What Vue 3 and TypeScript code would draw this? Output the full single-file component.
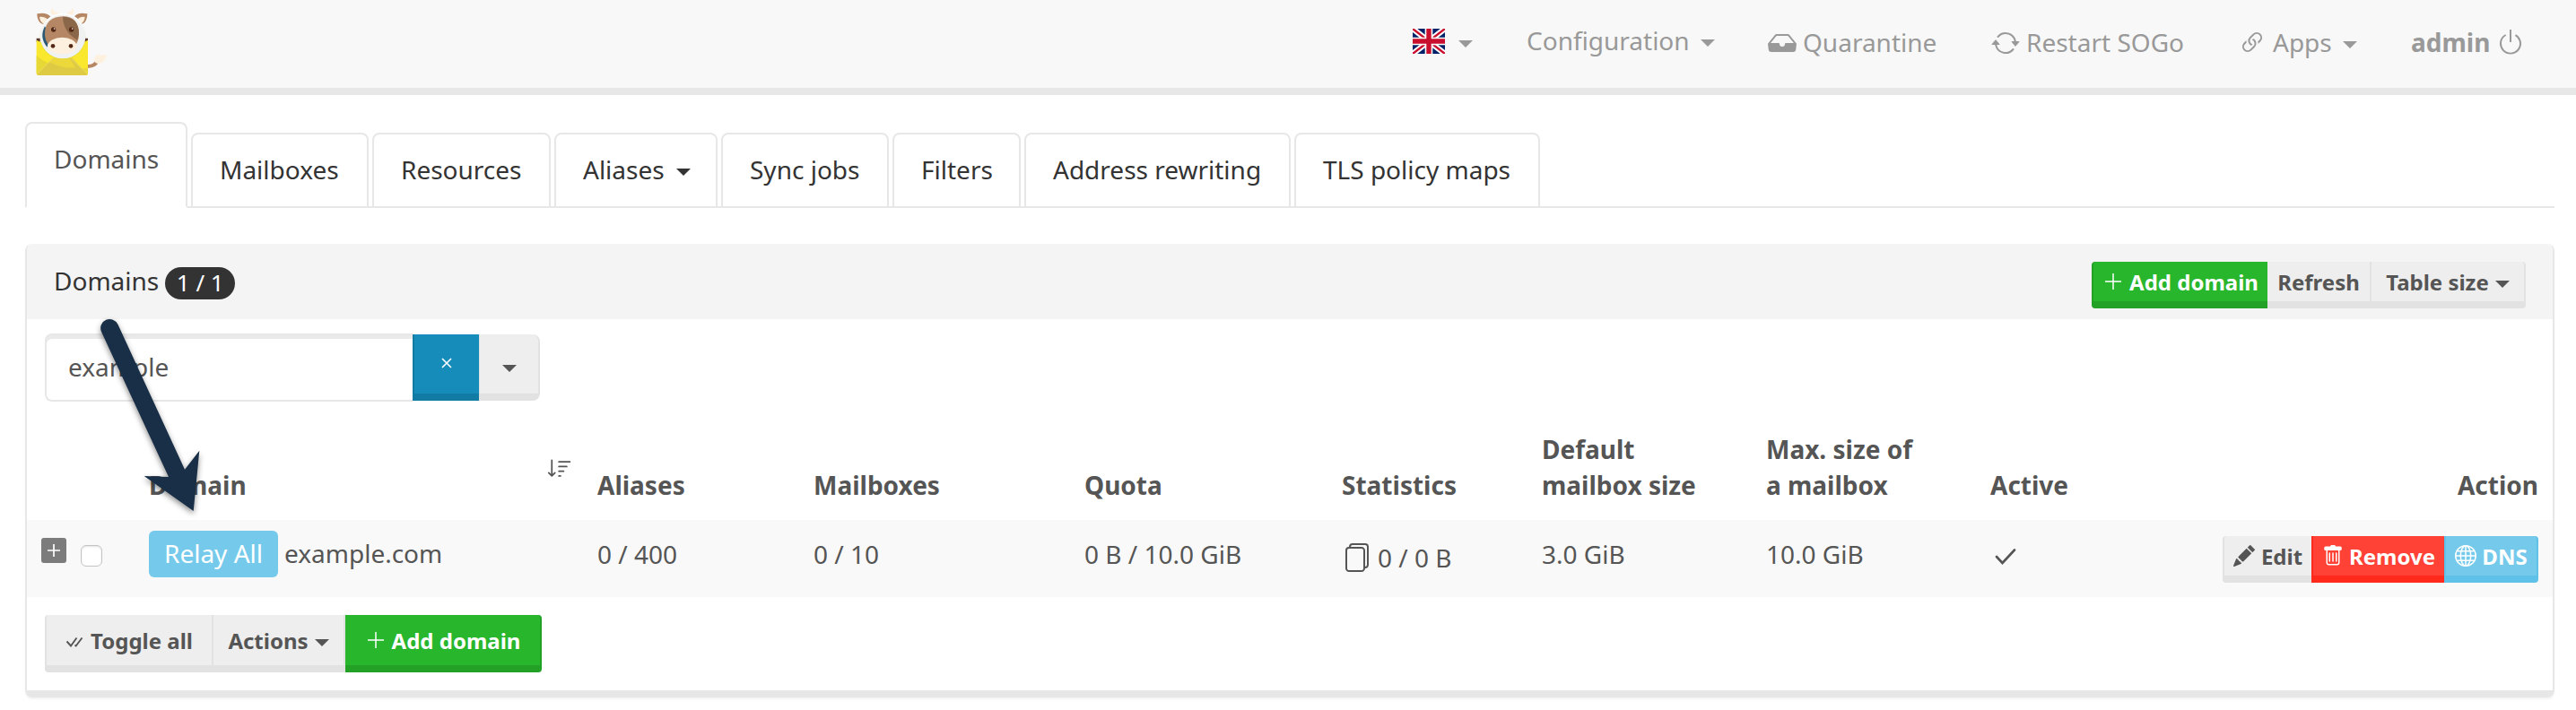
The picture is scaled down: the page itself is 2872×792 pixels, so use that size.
<script setup lang="ts">
interface Tab { label: string; width: number; caret?: boolean; active?: boolean }

const tabs: Tab[] = [
  { label: 'Domains', width: 181, active: true },
  { label: 'Mailboxes', width: 198 },
  { label: 'Resources', width: 199 },
  { label: 'Aliases', width: 182, caret: true },
  { label: 'Sync jobs', width: 187 },
  { label: 'Filters', width: 143 },
  { label: 'Address rewriting', width: 297 },
  { label: 'TLS policy maps', width: 274 },
]

const row = {
  domain: 'example.com',
  aliases: '0 / 400',
  mailboxes: '0 / 10',
  quota: '0 B / 10.0 GiB',
  stats: '0 / 0 B',
  defaultSize: '3.0 GiB',
  maxSize: '10.0 GiB',
}
</script>

<template>
  <div class="page">
    <header class="navbar">
      <svg class="logo" viewBox="0 0 330 300">
        <path d="M232 216c14 1 22-4 28-14l10 6c-6 14-20 20-38 20z" fill="#b58765" />
        <path d="M256 206c-4-12 4-20 16-26l2 6c8-2 18-4 26 0-8 4-8 24-26 26-8 2-12 0-18-6z" fill="#fef0de" />
        <path d="M62 128h12v12H62zM222 128h12v12h-12z" fill="#5a3a2a" />
        <path d="M62 134l12 6h148l12-6v110q0 8-8 8H70q-8 0-8-8z" fill="#f9e82d" />
        <path d="M62 186q50 48 172 42v16q0 8-8 8H70q-8 0-8-8z" fill="#e8d835" />
        <path d="M64 248l52-54h66l50 54q-3 4-8 4H72q-5 0-8-4z" fill="#dfcb43" />
        <path d="M104 206q44 24 88 20l-20-32h-48z" fill="#edd83c" />
        <path d="M64 247l54-52M232 247l-54-52" stroke="#f0e378" stroke-width="2" fill="none" />
        <path d="M112 48c-4-8-2-16 4-22 2 10 8 14 20 16v8zM184 48c4-8 4-16-2-22-2 10-8 14-18 16v8z" fill="#fef0de" />
        <path d="M64 46c20-4 36-2 46 10L88 82C72 80 64 66 64 46zM232 46c-20-4-36-2-44 10l22 26c14-2 22-16 22-36z" fill="#b58765" />
        <path d="M72 57c12-2 20 2 28 8L88 80c-10-4-15-12-16-23zM224 57c-12-2-18 2-26 8l12 15c8-4 13-12 14-23z" fill="#fef0de" />
        <circle cx="150" cy="120" r="76" fill="#dfcf2e" opacity=".5" transform="translate(0 3)" />
        <circle cx="150" cy="120" r="76" fill="#f0f2f2" />
        <path d="M76 108a75 75 0 0 1 148 0 76 76 0 0 0-148 0z" fill="#fff" />
        <path d="M90 88q-20 38 8 70l8-40z" fill="#2b5873" />
        <path d="M90 112c0-38 24-56 60-57 36 0 54 20 54 58 0 36-20 52-52 52s-62-10-62-53z" fill="#b58765" />
        <path d="M150 56c36 0 54 20 54 58l-5 20c-26-14-48-38-49-78z" fill="#896748" />
        <ellipse cx="148" cy="153" rx="48" ry="28" fill="#fef0de" />
        <g fill="#552815">
          <circle cx="119" cy="99" r="8" /><circle cx="179" cy="99" r="8" />
          <circle cx="117" cy="154" r="7" /><circle cx="177" cy="154" r="7" />
        </g>
        <circle cx="122" cy="96" r="2.5" fill="#fff" /><circle cx="182" cy="96" r="2.5" fill="#fff" />
      </svg>
      <div class="nav-item">
        <svg class="flag" viewBox="0 0 36 28">
          <path fill="#012169" d="M0 0h36v28H0z" />
          <path d="M0 0l36 28M36 0L0 28" stroke="#fff" stroke-width="6.4" />
          <path d="M0 0l36 28M36 0L0 28" stroke="#c8102e" stroke-width="2.4" />
          <path d="M18 0v28M0 14h36" stroke="#fff" stroke-width="8.6" />
          <path d="M18 0v28M0 14h36" stroke="#c8102e" stroke-width="5.4" />
        </svg>
        <i class="caret flag-caret"></i>
      </div>
      <div class="nav-item raised">Configuration<i class="caret nav-caret"></i></div>
      <div class="nav-item">
        <svg class="i32" viewBox="0 0 16 16"><path d="M4.98 4a.5.5 0 0 0-.39.188L1.54 8H6a.5.5 0 0 1 .5.5 1.5 1.5 0 1 0 3 0A.5.5 0 0 1 10 8h4.46l-3.05-3.812A.5.5 0 0 0 11.02 4H4.98zm-1.17-.437A1.5 1.5 0 0 1 4.98 3h6.04a1.5 1.5 0 0 1 1.17.563l3.7 4.625a.5.5 0 0 1 .106.374l-.39 3.124A1.5 1.5 0 0 1 14.117 13H1.883a1.5 1.5 0 0 1-1.489-1.314l-.39-3.124a.5.5 0 0 1 .106-.374l3.7-4.625z" /></svg>
        <span>Quarantine</span>
      </div>
      <div class="nav-item">
        <svg class="i32" viewBox="0 0 16 16"><path d="M11.534 7h3.932a.25.25 0 0 1 .192.41l-1.966 2.36a.25.25 0 0 1-.384 0l-1.966-2.36a.25.25 0 0 1 .192-.41zm-11 2h3.932a.25.25 0 0 0 .192-.41L2.692 6.23a.25.25 0 0 0-.384 0L.342 8.59A.25.25 0 0 0 .534 9z" /><path d="M8 3c-1.552 0-2.94.707-3.857 1.818a.5.5 0 1 1-.771-.636A6.002 6.002 0 0 1 13.917 7H12.9A5.002 5.002 0 0 0 8 3zM3.1 9a5.002 5.002 0 0 0 8.757 2.182.5.5 0 1 1 .771.636A6.002 6.002 0 0 1 2.083 9H3.1z" /></svg>
        <span>Restart SOGo</span>
      </div>
      <div class="nav-item">
        <svg class="i32" viewBox="0 0 16 16"><path d="M4.715 6.542 3.343 7.914a3 3 0 1 0 4.243 4.243l1.828-1.829A3 3 0 0 0 8.586 5.5L8 6.086a1.002 1.002 0 0 0-.154.199 2 2 0 0 1 .861 3.337L6.88 11.45a2 2 0 1 1-2.83-2.83l.793-.792a4.018 4.018 0 0 1-.128-1.287z" /><path d="M6.586 4.672A3 3 0 0 0 7.414 9.5l.775-.776a2 2 0 0 1-.896-3.346L9.12 3.55a2 2 0 1 1 2.83 2.83l-.793.792c.112.42.155.855.128 1.287l1.372-1.372a3 3 0 1 0-4.243-4.243L6.586 4.672z" /></svg>
        <span>Apps</span><i class="caret nav-caret"></i>
      </div>
      <div class="nav-item">
        <b>admin</b>
        <svg class="i32 power" viewBox="0 0 16 16"><path d="M7.5 1v7h1V1h-1z" /><path d="M3 8.812a4.999 4.999 0 0 1 2.578-4.375l-.485-.874A6 6 0 1 0 11 3.616l-.501.865A5 5 0 1 1 3 8.812z" /></svg>
      </div>
    </header>

    <nav class="tabs">
      <a v-for="t in tabs" :key="t.label" class="tab" :class="{ active: t.active }" :style="{ width: t.width + 'px' }">
        {{ t.label }}<i v-if="t.caret" class="caret tab-caret"></i>
      </a>
    </nav>

    <section class="panel">
      <div class="heading">
        <span class="title">Domains</span><span class="badge">1 / 1</span>
        <div class="group">
          <button class="btn green first w-add"><svg class="i24" viewBox="0 0 16 16"><path d="M8 2v12M2 8h12" class="line" /></svg><span>Add domain</span></button>
          <button class="btn w-refresh"><span>Refresh</span></button>
          <button class="btn last w-size"><span>Table size</span><i class="caret"></i></button>
        </div>
      </div>

      <div class="search">
        <div class="field">example</div>
        <div class="clear"><svg viewBox="0 0 12 12"><path d="M1 1l10 10M11 1L1 11" /></svg></div>
        <div class="drop"><i class="caret"></i></div>
      </div>

      <div class="grid head">
        <div></div>
        <div class="domain-head">Domain
          <svg class="sort" viewBox="0 0 16 16"><path d="M3.5 2.5a.5.5 0 0 0-1 0v8.793l-1.146-1.147a.5.5 0 0 0-.708.708l2 1.999.007.007a.497.497 0 0 0 .7-.006l2-2a.5.5 0 0 0-.707-.708L3.5 11.293V2.5zm3.5 1a.5.5 0 0 1 .5-.5h7a.5.5 0 0 1 0 1h-7a.5.5 0 0 1-.5-.5zM7.5 6a.5.5 0 0 0 0 1h5a.5.5 0 0 0 0-1h-5zm0 3a.5.5 0 0 0 0 1h3a.5.5 0 0 0 0-1h-3zm0 3a.5.5 0 0 0 0 1h1a.5.5 0 0 0 0-1h-1z" /></svg>
        </div>
        <div>Aliases</div>
        <div>Mailboxes</div>
        <div>Quota</div>
        <div>Statistics</div>
        <div>Default<br>mailbox size</div>
        <div>Max. size of<br>a mailbox</div>
        <div>Active</div>
        <div class="right">Action</div>
      </div>

      <div class="grid body">
        <div class="select">
          <span class="expand"><svg viewBox="0 0 28 28"><path d="M14 7v14M7 14h14" /></svg></span>
          <span class="check"></span>
        </div>
        <div class="domain"><span class="relay">Relay All</span>{{ row.domain }}</div>
        <div>{{ row.aliases }}</div>
        <div>{{ row.mailboxes }}</div>
        <div>{{ row.quota }}</div>
        <div class="stats">
          <svg class="i32" viewBox="0 0 16 16"><path fill="none" stroke="currentColor" d="M4.500 2.300V2A1.500 1.500 0 0 1 6 .5h7A1.500 1.500 0 0 1 14.500 2v10a1.500 1.500 0 0 1-1.500 1.500h-.3M4 2.500h7A1.500 1.500 0 0 1 12.500 4v10a1.500 1.500 0 0 1-1.500 1.500H4A1.500 1.500 0 0 1 2.500 14V4A1.500 1.500 0 0 1 4 2.500z" /></svg>
          {{ row.stats }}
        </div>
        <div>{{ row.defaultSize }}</div>
        <div>{{ row.maxSize }}</div>
        <div class="active-cell"><svg viewBox="0 0 24 18"><path d="M2 9l6.500 7L22 1.500" /></svg></div>
        <div class="group row-group">
          <button class="btn first w-edit"><svg class="i24" viewBox="0 0 16 16"><path d="M12.854.146a.5.5 0 0 0-.707 0L10.5 1.793 14.207 5.500l1.647-1.646a.5.5 0 0 0 0-.708l-3-3zm.646 6.061L9.793 2.500 3.293 9H3.500a.5.5 0 0 1 .5.5v.5h.5a.5.5 0 0 1 .5.5v.5h.5a.5.5 0 0 1 .5.5v.5h.5a.5.5 0 0 1 .5.5v.207l6.500-6.500zm-7.468 7.468A.5.5 0 0 1 6 13.500V13h-.5a.5.5 0 0 1-.5-.5V12h-.5a.5.5 0 0 1-.5-.5V11h-.5a.5.5 0 0 1-.5-.5V10h-.5a.499.499 0 0 1-.175-.032l-.179.178a.5.5 0 0 0-.11.168l-2 5a.5.5 0 0 0 .65.65l5-2a.5.5 0 0 0 .168-.11l.178-.178z" /></svg><span>Edit</span></button>
          <button class="btn red w-remove"><svg class="i24" viewBox="0 0 16 16"><path d="M5.500 5.500A.5.5 0 0 1 6 6v6a.5.5 0 0 1-1 0V6a.5.5 0 0 1 .5-.5zm2.500 0a.5.5 0 0 1 .5.5v6a.5.5 0 0 1-1 0V6a.5.5 0 0 1 .5-.5zm3 .5a.5.5 0 0 0-1 0v6a.5.5 0 0 0 1 0V6z" /><path fill-rule="evenodd" d="M14.500 3a1 1 0 0 1-1 1H13v9a2 2 0 0 1-2 2H5a2 2 0 0 1-2-2V4h-.5a1 1 0 0 1-1-1V2a1 1 0 0 1 1-1H6a1 1 0 0 1 1-1h2a1 1 0 0 1 1 1h3.500a1 1 0 0 1 1 1v1zM4.118 4 4 4.059V13a1 1 0 0 0 1 1h6a1 1 0 0 0 1-1V4.059L11.882 4H4.118z" /></svg><span>Remove</span></button>
          <button class="btn blue last w-dns"><svg class="i24" viewBox="0 0 16 16"><g class="line"><circle cx="8" cy="8" r="7.500" /><ellipse cx="8" cy="8" rx="3.800" ry="7.500" /><path d="M8 .5v15M.5 8h15M1.700 4.500h12.600M1.700 11.500h12.600" /></g></svg><span>DNS</span></button>
        </div>
      </div>

      <div class="group bottom">
        <button class="btn first w-toggle"><svg class="checks" viewBox="0 0 20 12"><path d="M1.500 5.500L6 10.500l6.500-9M10.500 9.500l1.200 1L18.500 1.500" /></svg><span>Toggle all</span></button>
        <button class="btn w-actions"><span>Actions</span><i class="caret"></i></button>
        <button class="btn green last w-add2"><svg class="i24" viewBox="0 0 16 16"><path d="M8 2v12M2 8h12" class="line" /></svg><span>Add domain</span></button>
      </div>
    </section>

    <svg class="arrow" viewBox="0 0 160 250">
      <path d="M33 20a10 10 0 0 1 18.500-8L126 173.700l16.300-21-6.600 67.300-55-39 27.300 1z" />
    </svg>
  </div>
</template>

<style>
body { margin: 0; background: #fff; }
</style>

<style scoped>
.page { position: relative; width: 2872px; height: 792px; overflow: hidden; font: 28px/40px "Noto Sans", sans-serif; color: #555; white-space: nowrap; }
.page * { box-sizing: border-box; }
svg { display: block; flex: none; fill: currentColor; }
.i32 { width: 32px; height: 32px; }
.i24 { width: 24px; height: 24px; }
.line { fill: none; stroke: currentColor; stroke-width: 1; }
.caret { display: inline-block; border: 8px solid transparent; border-top-color: currentColor; border-bottom: 0; }

.navbar { height: 106px; background: #f8f8f8; border-bottom: 8px solid #e7e7e7; display: grid; grid-template-columns: 20px 1555px 127px 269px 249px 275px 193px 1fr; color: #999; }
.logo { grid-column: 2; width: 110px; height: 100px; margin-bottom: -8px; }
.nav-item { display: flex; align-items: center; height: 40px; margin-top: 27px; }
.nav-item.raised { margin-top: 25px; }
.nav-item .i32 { margin-right: 7px; margin-top: 2px; }
.flag { width: 36px; height: 28px; margin-top: -2px; }
.flag-caret { margin: 4px 0 0 15px; }
.nav-caret { margin: 5px 0 0 12px; }
.nav-item .power { margin: 0 0 0 7px; }

.tabs { margin: 30px 24px 0 28px; height: 96px; display: flex; align-items: flex-end; gap: 4px; border-bottom: 2px solid #e7e7e7; }
.tab { display: block; height: 84px; margin-bottom: -2px; border: 2px solid #e7e7e7; border-radius: 8px 8px 0 0; padding: 19px 0 0 30px; background: #fff; color: #333; }
.tab.active { height: 96px; color: #555; border-bottom-color: #fff; }
.tab-caret { margin: 0 0 4px 13px; }

.panel { margin: 40px 24px 0 28px; height: 506px; border: 2px solid #e7e7e7; border-top: 0; border-bottom-width: 8px; border-radius: 8px; box-shadow: 0 2px 2px rgba(0, 0, 0, .05); }
.heading { height: 84px; background: #f4f4f4; border-radius: 8px 8px 0 0; padding: 20px 30px 0 30px; display: flex; color: #333; }
.title { margin-top: 1px; }
.badge { height: 36px; width: 78px; margin: 6px 0 0 7px; border-radius: 18px; background: #333; color: #fff; font-size: 26px; line-height: 34px; text-align: center; }
.group { display: flex; }
.heading .group { margin-left: auto; }

.btn { display: flex; align-items: center; justify-content: center; height: 52px; padding: 0; border: 0 solid #e2e2e2; border-bottom-width: 8px; border-right-width: 2px; background: #eee; color: #555; font: bold 24px/36px "Noto Sans", sans-serif; white-space: nowrap; }
.btn span { padding-top: 2px; }
.btn .caret { margin: 5px 0 0 7px; }
.btn.first { border-left-width: 2px; border-radius: 4px 0 0 4px; }
.btn.last { border-radius: 0 4px 4px 0; }
.btn.green { background: #28b62c; border-color: #23a127; color: #fff; }
.btn.red { background: #ff4136; border-color: #ff291c; color: #fff; border-width: 0 0 8px 2px; }
.btn.blue { background: #75caeb; border-color: #5fc1e8; color: #fff; border-left-width: 2px; }
.btn .i24 { margin-right: 6px; }
.w-add { width: 196px; }
.heading .w-add { border-right: 0; }
.w-refresh { width: 116px; }
.w-size { width: 172px; }
.w-edit { width: 99px; }
.btn.w-edit { border-right: 0; }
.w-edit .i24 { margin-right: 7px; }
.w-remove { width: 148px; }
.w-dns { width: 105px; }
.w-toggle { width: 188px; }
.w-actions { width: 147px; }
.w-add2 { width: 219px; }

.search { display: flex; margin: 16px 0 0 20px; height: 76px; }
.field { width: 410px; border: 2px solid #e7e7e7; border-right: 0; border-radius: 8px 0 0 8px; box-shadow: inset 0 4px 0 #eaeaea; padding: 15px 0 0 24px; }
.clear { width: 74px; height: 74px; margin-top: 1px; background: #158cba; border-bottom: 8px solid #127ba3; border-left: 2px solid #127ba3; display: flex; align-items: center; justify-content: center; }
.clear svg { width: 12px; height: 12px; margin-bottom: 2px; fill: none; stroke: #fff; stroke-width: 1.6; }
.drop { width: 68px; height: 74px; margin-top: 1px; background: #eee; border: 0 solid #e2e2e2; border-width: 0 2px 8px 1px; border-radius: 0 8px 8px 0; display: flex; align-items: center; justify-content: center; }
.drop .caret { margin-top: 9px; }

.grid { display: grid; grid-template-columns: 136px 500px 241px 302px 287px 223px 250px 250px 258px 1fr; padding-right: 16px; }
.head { height: 132px; padding-bottom: 19px; align-items: end; font-weight: bold; }
.domain-head { display: flex; }
.sort { width: 28px; height: 28px; margin: -12px 28px 0 auto; }
.right { text-align: right; }
.body { height: 86px; background: #f9f9f9; padding-top: 18px; }
.select { display: flex; padding-left: 16px; }
.expand { width: 28px; height: 28px; margin-top: 2px; background: #7c7c7c; border-radius: 3px; }
.expand svg { fill: none; stroke: #fff; stroke-width: 1.7; }
.check { width: 24px; height: 24px; margin: 10px 0 0 16px; background: #fff; border: 1px solid #c4c4c4; border-radius: 6px; box-shadow: inset 0 1px 2px rgba(0, 0, 0, .12); }
.domain { display: flex; margin-top: -1px; }
.relay { width: 144px; height: 52px; margin: -5px 7px 0 0; padding-top: 5px; background: #75caeb; border-radius: 6px; color: #fff; text-align: center; }
.stats { display: flex; gap: 8px; margin: 4px 0 0 0; }
.stats .i32 { margin-top: 4px; }
.active-cell svg { width: 24px; height: 18px; margin: 14px 0 0 5px; fill: none; stroke: #555; stroke-width: 2.6; stroke-linecap: round; }
.row-group { justify-content: flex-end; }
.bottom { margin: 20px 0 0 20px; }
.bottom .btn { height: 64px; }
.checks { width: 20px; height: 12px; margin: 4px 8px 0 0; fill: none; stroke: currentColor; stroke-width: 1.9; }

.arrow { position: absolute; left: 80px; top: 350px; width: 160px; height: 250px; fill: #182f47; filter: drop-shadow(0 3px 3px rgba(0, 0, 0, .45)); }
</style>
